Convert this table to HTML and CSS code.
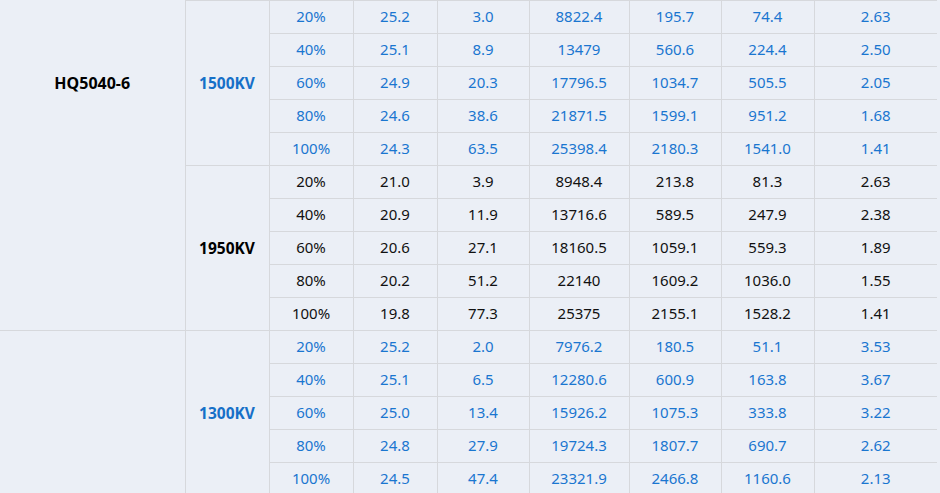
FILE: index.html
```html
<!DOCTYPE html>
<html>
<head>
<meta charset="utf-8">
<link rel="stylesheet" href="styles.css">
</head>
<body>
<table class="spec">
  <colgroup>
    <col class="c-model"><col class="c-kv"><col class="c-pct"><col class="c-v1"><col class="c-v2"><col class="c-v3"><col class="c-v4"><col class="c-v5"><col class="c-last">
  </colgroup>
  <tbody>
    <tr class="blue first">
      <td class="model" rowspan="10"><span class="model-name">HQ5040-6</span></td>
      <td class="kv" rowspan="5">1500KV</td>
      <td>20%</td><td>25.2</td><td>3.0</td><td>8822.4</td><td>195.7</td><td>74.4</td><td class="last">2.63</td>
    </tr>
    <tr class="blue"><td>40%</td><td>25.1</td><td>8.9</td><td>13479</td><td>560.6</td><td>224.4</td><td class="last">2.50</td></tr>
    <tr class="blue"><td>60%</td><td>24.9</td><td>20.3</td><td>17796.5</td><td>1034.7</td><td>505.5</td><td class="last dk">2.05</td></tr>
    <tr class="blue"><td>80%</td><td>24.6</td><td>38.6</td><td>21871.5</td><td>1599.1</td><td>951.2</td><td class="last">1.68</td></tr>
    <tr class="blue"><td>100%</td><td>24.3</td><td>63.5</td><td>25398.4</td><td>2180.3</td><td>1541.0</td><td class="last">1.41</td></tr>

    <tr class="black">
      <td class="kv" rowspan="5">1950KV</td>
      <td>20%</td><td>21.0</td><td>3.9</td><td>8948.4</td><td>213.8</td><td>81.3</td><td class="last dk">2.63</td>
    </tr>
    <tr class="black"><td>40%</td><td>20.9</td><td>11.9</td><td>13716.6</td><td>589.5</td><td>247.9</td><td class="last dk">2.38</td></tr>
    <tr class="black"><td>60%</td><td>20.6</td><td>27.1</td><td>18160.5</td><td>1059.1</td><td>559.3</td><td class="last">1.89</td></tr>
    <tr class="black"><td>80%</td><td>20.2</td><td>51.2</td><td>22140</td><td>1609.2</td><td>1036.0</td><td class="last">1.55</td></tr>
    <tr class="black"><td>100%</td><td>19.8</td><td>77.3</td><td>25375</td><td>2155.1</td><td>1528.2</td><td class="last">1.41</td></tr>

    <tr class="blue">
      <td class="model" rowspan="5"></td>
      <td class="kv" rowspan="5">1300KV</td>
      <td>20%</td><td>25.2</td><td>2.0</td><td>7976.2</td><td>180.5</td><td>51.1</td><td class="last">3.53</td>
    </tr>
    <tr class="blue"><td>40%</td><td>25.1</td><td>6.5</td><td>12280.6</td><td>600.9</td><td>163.8</td><td class="last">3.67</td></tr>
    <tr class="blue"><td>60%</td><td>25.0</td><td>13.4</td><td>15926.2</td><td>1075.3</td><td>333.8</td><td class="last">3.22</td></tr>
    <tr class="blue"><td>80%</td><td>24.8</td><td>27.9</td><td>19724.3</td><td>1807.7</td><td>690.7</td><td class="last">2.62</td></tr>
    <tr class="blue"><td>100%</td><td>24.5</td><td>47.4</td><td>23321.9</td><td>2466.8</td><td>1160.6</td><td class="last">2.13</td></tr>
  </tbody>
</table>
</body>
</html>
```

FILE: styles.css
```css
html, body {
  margin: 0;
  padding: 0;
  background: #ebeff6;
  overflow: hidden;
}

.spec {
  border-collapse: collapse;
  table-layout: fixed;
  width: 937px;
  font-family: "Noto Sans", "Open Sans", sans-serif;
  font-size: 15px;
}

.c-model { width: 185px; }
.c-kv { width: 84px; }
.c-pct { width: 84px; }
.c-v1 { width: 84px; }
.c-v2 { width: 92px; }
.c-v3 { width: 100px; }
.c-v4 { width: 92px; }
.c-v5 { width: 93px; }
.c-last { width: 123px; }

.spec td {
  height: 30px;
  padding: 0 0 2px;
  text-align: center;
  vertical-align: middle;
  border: 1px solid #d6d8dc;
  line-height: 20px;
  white-space: nowrap;
}

.spec td.model {
  border-left: none;
  vertical-align: top;
  padding: 72px 0 0;
  font-weight: bold;
  font-size: 16px;
  color: #000;
}

.spec tr.first td { border-top: 1px solid #d6d8dc; }
.spec tr.first td.model { border-top: none; }

.spec td.last { border-right: none; }
.spec td.last.dk { border-top-color: #c4c6ca; }

.blue td { color: #1a76d0; }
.black td { color: #111; }

.spec td.kv { font-weight: bold; font-size: 15.5px; padding: 0; }
.blue td.kv { color: #1670c8; }
.black td.kv { color: #000; }
```
